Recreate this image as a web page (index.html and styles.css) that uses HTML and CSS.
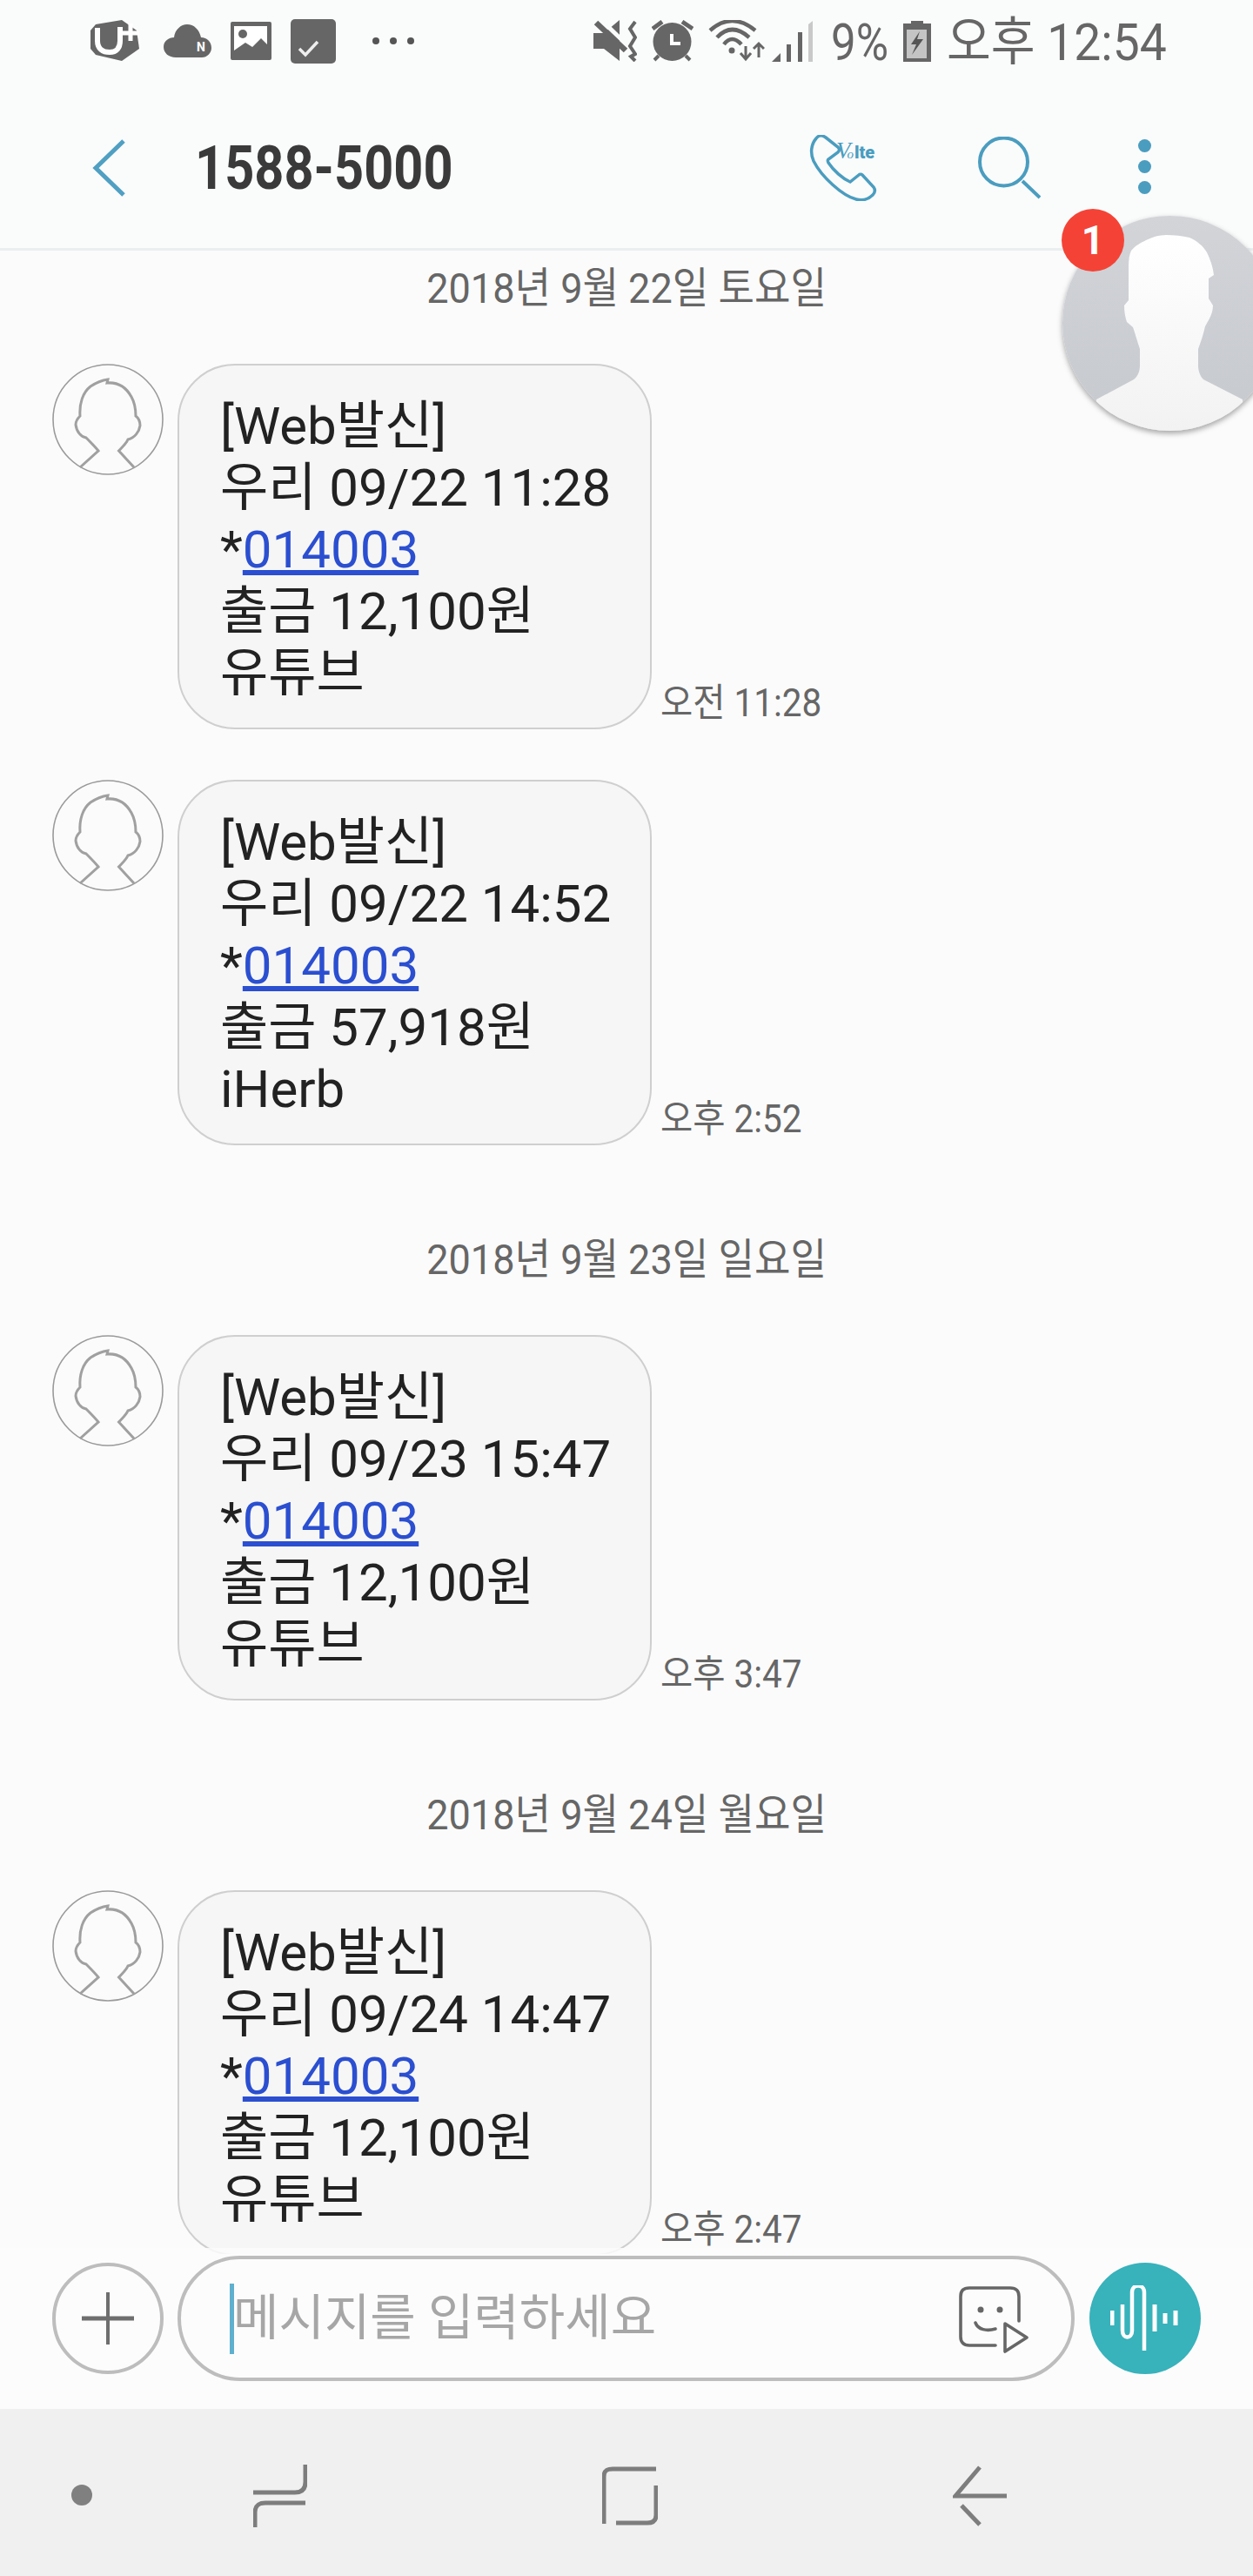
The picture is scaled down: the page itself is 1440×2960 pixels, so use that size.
FILE: index.html
```html
<!DOCTYPE html>
<html lang="ko">
<head>
    <meta charset="UTF-8">
    <title>1588-5000</title>
    <link rel="stylesheet" href="styles.css">
</head>
<body>

<svg class="defs" width="0" height="0">
    <symbol id="person" viewBox="0 0 128 128">
        <circle cx="64" cy="64" r="63" fill="none" stroke="#9a9a9a" stroke-width="1.6"/>
        <path d="M32 119 53 100C49 95 44 90 39 85 33 84 28 78 27 70 27 66 29 63 32 60 31 46 35 33 44 26 50 22 57 19 64 18L63 22C75 21 85 27 91 38 95 45 96 52 96 60 100 63 101 67 101 71 100 78 95 85 87 87 85 92 80 96 76.5 100L94 119" fill="none" stroke="#a0a0a0" stroke-width="3"/>
    </symbol>
</svg>

<div class="phone">
    <div class="status-bar">
        <div class="status-left">
            <svg class="ic" width="56" height="48" viewBox="0 0 56 48"><path d="M6 5 36 0 53 12 56 33 36 47 6 40 0 33V12Z" fill="#666"/><path d="M8 9V24C8 33 14 37 22 37 30 37 34 32 34 24V8" fill="none" stroke="#fff" stroke-width="6"/><path d="M46 4V24M37 15H56" fill="none" stroke="#fff" stroke-width="5"/></svg>
            <svg class="ic cloud" width="55" height="38" viewBox="0 0 55 38"><path d="M14 38C6 38 0 33 0 26 0 19 6 15 12 15 13 6 20 0 27 0 35 0 41 6 43 15 50 15 55 20 55 27 55 33 50 38 44 38Z" fill="#666"/><text class="mini-n" x="43" y="31" text-anchor="middle">N</text></svg>
            <svg class="ic" width="47" height="44" viewBox="0 0 47 44"><rect width="47" height="44" rx="2" fill="#666"/><path d="M4 5H42V26L35 19 25 29 17 24 4 33Z" fill="#fff"/><circle cx="14" cy="14" r="5" fill="#666"/></svg>
            <svg class="ic" width="52" height="51" viewBox="0 0 52 51"><rect width="52" height="51" rx="5" fill="#666"/><path d="M10 34 17 41 31 26" fill="none" stroke="#eee" stroke-width="3.5"/></svg>
            <div class="more-dots"><span></span><span></span><span></span></div>
        </div>
        <div class="status-right">
            <svg class="ic" width="50" height="48" viewBox="0 0 50 48"><path d="M0 15H12L30 0V47L12 33H0Z" fill="#666"/><path d="M8-1 40 30" stroke="#fafbfb" stroke-width="5"/><path d="M3 3 37 35" stroke="#666" stroke-width="6.5"/><path d="M48 2 42 10 48 20 42 30 48 39 43 42 48 47" fill="none" stroke="#666" stroke-width="4"/></svg>
            <svg class="ic alarm" width="48" height="48" viewBox="0 0 48 48"><circle cx="23.5" cy="25" r="22" fill="#666"/><path d="M23 16V27H33" fill="none" stroke="#fff" stroke-width="4"/><path d="M1 10 12 2M35 2 47 10" stroke="#666" stroke-width="5"/><path d="M3 46 8 41M44 46 39 41" stroke="#666" stroke-width="4"/></svg>
            <svg class="ic wifi" width="65" height="48" viewBox="0 0 65 48"><g fill="none" stroke="#666" stroke-width="4.5"><path d="M2 12Q27-10 54 12"/><path d="M10 20Q27 2 47 20"/><path d="M18 28Q27 16 38 28"/></g><circle cx="27" cy="35" r="3.5" fill="#666"/><path d="M43 30V45M37 38 43 45 49 38M58 43V28M52 33 58 27 64 33" fill="none" stroke="#666" stroke-width="3"/></svg>
            <svg class="ic" width="48" height="47" viewBox="0 0 48 47"><path d="M0 47 10 37V47Z" fill="#666"/><rect x="17" y="27" width="5" height="20" fill="#666"/><rect x="30" y="13" width="5" height="34" fill="#666"/><path d="M42 4 47 0V47H42Z" fill="#c9c9c9"/></svg>
            <span class="status-text pct">9%</span>
            <svg class="ic" width="32" height="47" viewBox="0 0 32 47"><path d="M9 0H23V3H32V47H0V3H9Z" fill="#666"/><rect x="4" y="10" width="23" height="33" fill="#c4c4c4"/><path d="M19 12 9 27H15L10 39 23 21H16Z" fill="#555"/></svg>
            <span class="status-text clock">오후 12:54</span>
        </div>
    </div>

    <div class="app-header">
        <svg class="back" width="38" height="66" viewBox="0 0 38 66"><path d="M36 2 4 33 36 64" fill="none" stroke="#4fa0c2" stroke-width="5"/></svg>
        <h1 class="title">1588-5000</h1>
        <div class="header-actions">
            <div class="call-ic">
                <svg width="84" height="76" viewBox="0 0 84 76"><path d="M8 4C11 0 15 0 19 3L33 14C35 16 35 18 33 20L22 28C21 29 21 30 22 32 28 41 38 50 47 54L57 46C58 45 60 45 61 46L74 60C76 63 76 66 73 69 69 73 62 76 54 74 38 70 14 48 5 30 1 21 2 11 8 4Z" fill="none" stroke="#4a9dbf" stroke-width="3.5"/></svg>
                <span class="volte"><i>V</i><em>o</em><b>lte</b></span>
            </div>
            <svg class="search" width="72" height="72" viewBox="0 0 72 72"><circle cx="29.5" cy="29" r="27.5" fill="none" stroke="#4a9dbf" stroke-width="4"/><path d="M51 51 71 70" stroke="#4a9dbf" stroke-width="4"/></svg>
            <div class="kebab"><span></span><span></span><span></span></div>
        </div>
    </div>

    <div class="messages">
        <div class="date">2018년 9월 22일 토요일</div>
        <div class="msg">
            <svg class="avatar" width="128" height="128"><use href="#person"/></svg>
            <div class="bubble">[Web발신]<br>우리 09/22 11:28<br>*<a class="num">014003</a><br>출금 12,100원<br>유튜브</div>
            <span class="time">오전 11:28</span>
        </div>
        <div class="msg">
            <svg class="avatar" width="128" height="128"><use href="#person"/></svg>
            <div class="bubble">[Web발신]<br>우리 09/22 14:52<br>*<a class="num">014003</a><br>출금 57,918원<br>iHerb</div>
            <span class="time">오후 2:52</span>
        </div>
        <div class="date date-gap">2018년 9월 23일 일요일</div>
        <div class="msg">
            <svg class="avatar" width="128" height="128"><use href="#person"/></svg>
            <div class="bubble">[Web발신]<br>우리 09/23 15:47<br>*<a class="num">014003</a><br>출금 12,100원<br>유튜브</div>
            <span class="time">오후 3:47</span>
        </div>
        <div class="date date-gap">2018년 9월 24일 월요일</div>
        <div class="msg">
            <svg class="avatar" width="128" height="128"><use href="#person"/></svg>
            <div class="bubble">[Web발신]<br>우리 09/24 14:47<br>*<a class="num">014003</a><br>출금 12,100원<br>유튜브</div>
            <span class="time">오후 2:47</span>
        </div>
    </div>

    <div class="input-bar">
        <div class="plus-btn">
            <svg width="60" height="60" viewBox="0 0 60 60"><path d="M0 30H60" stroke="#6e6e6e" stroke-width="5"/><path d="M30 0V60" stroke="#6e6e6e" stroke-width="4"/></svg>
        </div>
        <div class="input-box">
            <span class="cursor"></span>
            <span class="placeholder">메시지를 입력하세요</span>
            <svg class="sticker" width="80" height="78" viewBox="0 0 80 78"><path d="M42 68H12C5 68 2 64 2 58V12C2 5 5 2 12 2H59C66 2 69 5 69 12V40" fill="none" stroke="#666" stroke-width="3.6" stroke-linecap="round"/><circle cx="25" cy="27" r="3.5" fill="#666"/><circle cx="47" cy="27" r="3.5" fill="#666"/><path d="M19 42C22 50 32 52 42 49" fill="none" stroke="#666" stroke-width="3.6" stroke-linecap="round"/><path d="M53 43 78 59 53 75Z" fill="none" stroke="#666" stroke-width="3.6" stroke-linejoin="round"/></svg>
        </div>
        <div class="mic-btn">
            <svg width="80" height="76" viewBox="0 0 80 76"><g fill="none" stroke="#fff" stroke-width="5"><path d="M2 29V46M51 22V53M63 32V44M75 29V46"/><path d="M14 22V52C14 62 25 62 25 52V8C25-2 39-2 39 8V75" stroke-width="4.5"/></g></svg>
        </div>
    </div>

    <div class="nav-bar">
        <span class="nav-dot"></span>
        <svg class="nav-recent" width="62" height="72" viewBox="0 0 62 72"><path d="M60 0V20C60 28 56 32 48 32H0M60 44H14C5 44 2 48 2 56V72" fill="none" stroke="#7d7d7d" stroke-width="5"/></svg>
        <svg class="nav-home" width="64" height="68" viewBox="0 0 64 68"><path d="M2 66V12C2 5 5 3 12 3H62M62 22V56C62 62 59 65 52 65H16" fill="none" stroke="#7d7d7d" stroke-width="5"/></svg>
        <svg class="nav-back" width="62" height="70" viewBox="0 0 62 70"><path d="M31 2 3 35H62M10 46 31 68" fill="none" stroke="#7d7d7d" stroke-width="5"/></svg>
    </div>

    <div class="chat-head">
        <svg width="247" height="247" viewBox="0 0 247 247"><defs><clipPath id="headClip"><circle cx="123.5" cy="123.5" r="123.5"/></clipPath><linearGradient id="headBg" x1="0" y1="0" x2="0" y2="1"><stop offset="0" stop-color="#d2d4d8"/><stop offset="1" stop-color="#c6c9ce"/></linearGradient><linearGradient id="headFg" x1="0" y1="0" x2="0" y2="1"><stop offset="0" stop-color="#ffffff"/><stop offset="1" stop-color="#f2f2f2"/></linearGradient></defs><g clip-path="url(#headClip)"><rect width="247" height="247" fill="url(#headBg)"/><path d="M39 211 82 188C87 184 89 178 89 172V153C86 145 84 136 81 128L74 122C72 116 71 110 71 103L76 97V58C76 50 77 44 79 40 84 34 90 31 96 28 104 24 111 22 119 22 128 22 138 23 146 25 155 29 162 35 166 42 170 50 173 59 174 68L168 72V95L173 103C173 109 171 114 169 118L164 127C162 136 159 145 156 153V172C156 178 158 184 162 188L207 211 207 247H39Z" fill="url(#headFg)"/></g></svg>
        <span class="badge">1</span>
    </div>
</div>

</body>
</html>
```

FILE: styles.css
```css
* {
    margin: 0;
    padding: 0;
    box-sizing: border-box;
}

body {
    background-color: #fbfbfb;
    font-family: Roboto, "Noto Sans CJK KR", sans-serif;
}

.defs {
    display: block;
    height: 0;
}

.phone {
    position: relative;
    width: 1440px;
    height: 2960px;
    display: flex;
    flex-direction: column;
    overflow: hidden;
    background-color: #fbfbfb;
}

.ic {
    display: block;
    flex: none;
}

/* status bar */
.status-bar {
    height: 128px;
    display: flex;
    justify-content: space-between;
    align-items: center;
    padding: 0 102px 34px 104px;
    background-color: #fafbfb;
}

.status-left {
    display: flex;
    align-items: center;
    gap: 22px;
}

.cloud {
    margin-left: 6px;
}

.mini-n {
    font-family: Roboto, sans-serif;
    font-size: 14px;
    font-weight: 700;
    fill: #fff;
}

.more-dots {
    display: flex;
    gap: 12px;
    margin-left: 20px;
}

.more-dots span {
    width: 8px;
    height: 8px;
    border-radius: 50%;
    background-color: #555;
}

.status-right {
    display: flex;
    align-items: center;
    gap: 8px;
}

.alarm,
.wifi {
    margin-left: 9px;
}

.status-text {
    font-size: 60px;
    color: #666;
    white-space: nowrap;
    transform-origin: left center;
    line-height: 60px;
    padding-top: 4px;
}

.pct {
    width: 65px;
    transform: scaleX(0.85);
    margin: 0 10px 0 12px;
}

.clock {
    width: 250px;
    transform: scaleX(0.92);
    margin-left: 10px;
}

/* app header */
.app-header {
    height: 160px;
    display: flex;
    align-items: center;
    position: relative;
    padding: 0 0 27px 106px;
    background-color: #fafbfb;
    border-bottom: 3px solid #ebeff0;
}

.back {
    display: block;
    flex: none;
}

.title {
    margin-left: 80px;
    font-size: 70px;
    font-weight: 700;
    color: #3a3a3a;
    line-height: 80px;
    transform: scaleX(0.85);
    transform-origin: left center;
}

.header-actions {
    position: absolute;
    top: 27px;
    right: 0;
    left: 930px;
    display: flex;
}

.call-ic {
    position: relative;
    width: 84px;
    height: 76px;
}

.call-ic svg {
    display: block;
}

.volte {
    position: absolute;
    left: 31px;
    top: 3px;
    color: #4a9dbf;
    white-space: nowrap;
}

.volte i {
    font-family: "Liberation Serif", serif;
    font-size: 27px;
    font-style: italic;
}

.volte em {
    font-family: "Liberation Serif", serif;
    font-size: 15px;
    font-style: italic;
    margin-left: -4px;
}

.volte b {
    font-family: Roboto, sans-serif;
    font-size: 20px;
    font-weight: 900;
    margin-left: 1px;
}

.search {
    display: block;
    margin-left: 110px;
    margin-top: 2px;
}

.kebab {
    display: flex;
    flex-direction: column;
    gap: 9px;
    margin-left: 112px;
    margin-top: 5px;
}

.kebab span {
    width: 15px;
    height: 15px;
    border-radius: 50%;
    background-color: #4a9dbf;
}

/* messages */
.messages {
    flex: 1;
    overflow: hidden;
    position: relative;
}

.messages::after {
    content: "";
    position: absolute;
    left: 0;
    right: 0;
    bottom: 0;
    height: 7px;
    background-color: rgba(252, 252, 252, 0.85);
}

.date {
    font-size: 49px;
    line-height: 60px;
    height: 60px;
    padding-top: 2px;
    color: #666;
    text-align: center;
    transform: scaleX(0.92);
    margin-top: 12px;
    margin-bottom: 58px;
}

.date-gap {
    margin-top: 100px;
}

.msg {
    display: flex;
    align-items: flex-end;
    padding-left: 60px;
    margin-bottom: 58px;
}

.avatar {
    display: block;
    flex: none;
    align-self: flex-start;
}

.bubble {
    width: 545px;
    height: 420px;
    margin-left: 16px;
    padding: 34px 0 0 47px;
    background-color: #f6f6f6;
    border: 2px solid #cfcfcf;
    border-radius: 66px;
    font-size: 60px;
    line-height: 71px;
    color: #222;
    white-space: nowrap;
}

.num {
    color: #2b4fd0;
    text-decoration: underline;
}

.time {
    margin: 0 0 8px 10px;
    font-size: 44px;
    line-height: 44px;
    color: #666;
    white-space: nowrap;
    transform: scaleX(0.92);
    transform-origin: left center;
}

/* input row */
.input-bar {
    height: 178px;
    display: flex;
    align-items: flex-start;
    padding: 2px 0 0 60px;
    background-color: #fcfcfc;
}

.plus-btn {
    width: 128px;
    height: 128px;
    margin-top: 8px;
    border: 4px solid #bdbdbd;
    border-radius: 50%;
    display: flex;
    align-items: center;
    justify-content: center;
    flex: none;
}

.plus-btn svg,
.mic-btn svg {
    display: block;
}

.input-box {
    width: 1031px;
    height: 144px;
    margin-left: 16px;
    border: 4px solid #bdbdbd;
    border-radius: 72px;
    display: flex;
    align-items: center;
    padding-left: 56px;
    position: relative;
    flex: none;
}

.cursor {
    width: 5px;
    height: 81px;
    background-color: #5fb0cf;
    flex: none;
}

.placeholder {
    font-size: 57px;
    line-height: 60px;
    color: #a6a6a6;
    white-space: nowrap;
    margin: 0 0 0 -1px;
}

.sticker {
    position: absolute;
    right: 49px;
    top: 31px;
}

.mic-btn {
    width: 128px;
    height: 128px;
    margin: 8px 0 0 17px;
    border-radius: 50%;
    background-color: #38b2bb;
    display: flex;
    align-items: center;
    justify-content: center;
    flex: none;
}

/* nav bar */
.nav-bar {
    height: 192px;
    position: relative;
    background-color: #f0f0f0;
}

.nav-dot {
    position: absolute;
    left: 82px;
    top: 87px;
    width: 24px;
    height: 24px;
    border-radius: 50%;
    background-color: #808080;
}

.nav-recent {
    position: absolute;
    left: 291px;
    top: 64px;
}

.nav-home {
    position: absolute;
    left: 692px;
    top: 66px;
}

.nav-back {
    position: absolute;
    left: 1095px;
    top: 65px;
}

/* floating chat head */
.chat-head {
    position: absolute;
    left: 1221px;
    top: 248px;
    width: 247px;
    height: 247px;
    border-radius: 50%;
    box-shadow: 0 3px 6px rgba(0, 0, 0, 0.35);
}

.chat-head svg {
    display: block;
}

.badge {
    position: absolute;
    left: -1px;
    top: -8px;
    width: 72px;
    height: 72px;
    border-radius: 50%;
    background-color: #f44336;
    color: #fff;
    font-size: 46px;
    font-weight: 700;
    line-height: 72px;
    text-align: center;
}
```
